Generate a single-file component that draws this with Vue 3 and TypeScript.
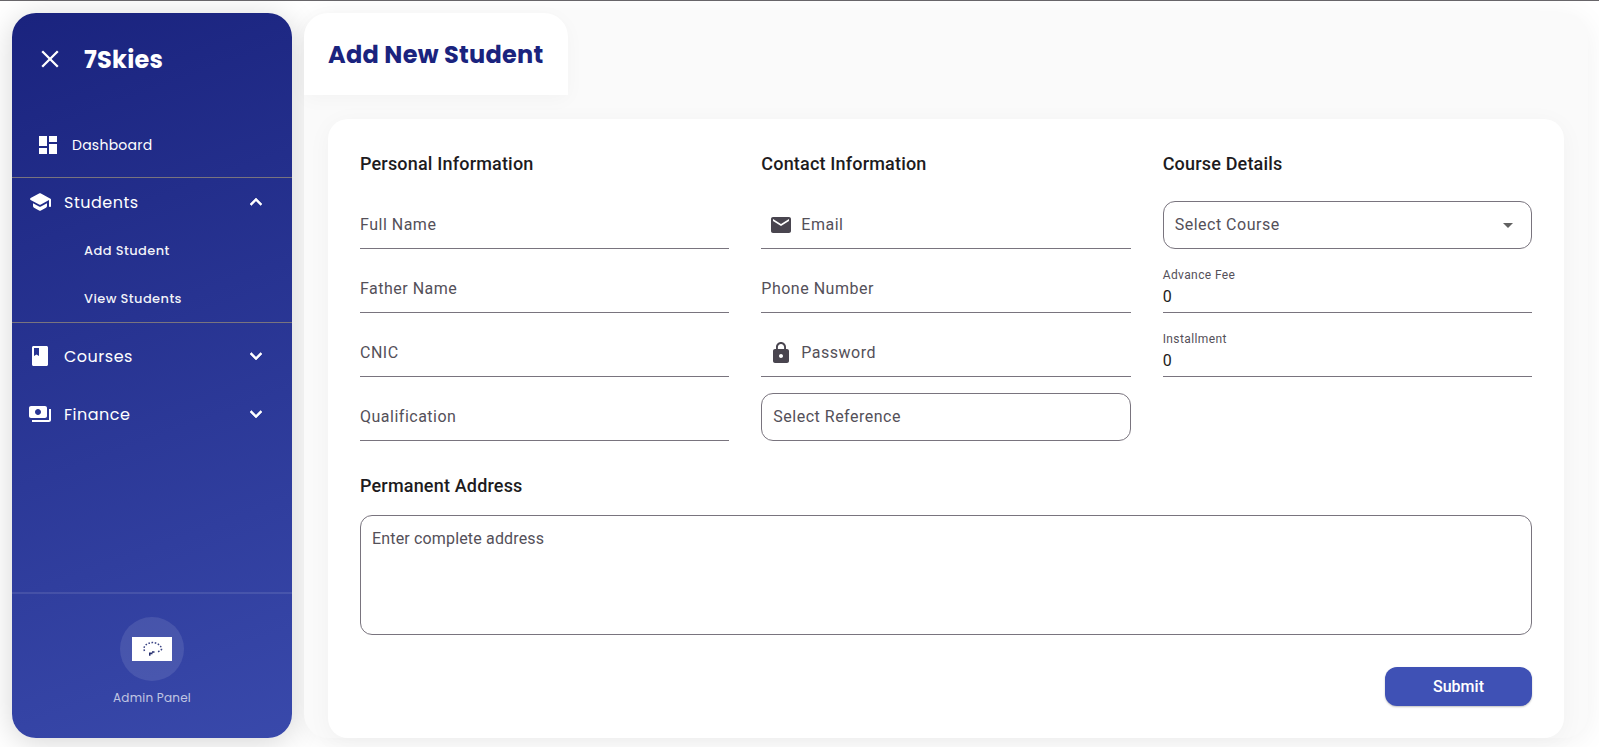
<script setup lang="ts">
interface NavGroup {
  label: string
  icon: string
  open: boolean
  children: string[]
}

interface Field {
  label: string
  value?: string
  icon?: string
  kind?: 'outline' | 'select'
}

interface Section {
  title: string
  fields: Field[]
}

const icons = {
  dashboard: 'M3 13h8V3H3v10zm0 8h8v-6H3v6zm10 0h8V11h-8v10zm0-18v6h8V3h-8z',
  school:
    'M5 13.18v2.81c0 .73.4 1.41 1.04 1.76l5 2.73c.6.33 1.32.33 1.92 0l5-2.73c.64-.35 1.04-1.03 1.04-1.76v-2.81l-6.04 3.3c-.6.33-1.32.33-1.92 0L5 13.18zm6.04-9.66l-8.43 4.6c-.69.38-.69 1.38 0 1.76l8.43 4.6c.6.33 1.32.33 1.92 0L21 10.09V16c0 .55.45 1 1 1s1-.45 1-1V9.59c0-.37-.2-.7-.52-.88l-9.52-5.19c-.6-.32-1.32-.32-1.92 0z',
  book: 'M18.500 2H5.500C4.700 2 4 2.700 4 3.500v17c0 .8.7 1.500 1.500 1.500h13c.8 0 1.500-.7 1.500-1.500v-17c0-.8-.7-1.500-1.500-1.500zM6 4h5v8l-2.500-1.500L6 12V4z',
  payments:
    'M19 14V6c0-1.100-.9-2-2-2H3c-1.100 0-2 .9-2 2v8c0 1.100.9 2 2 2h14c1.100 0 2-.9 2-2zm-9-1c-1.660 0-3-1.340-3-3s1.340-3 3-3 3 1.340 3 3-1.340 3-3 3zm13-6v11c0 1.100-.9 2-2 2H4v-2h17V7h2z',
  less: 'M12 8l-6 6 1.41 1.41L12 10.83l4.59 4.58L18 14z',
  more: 'M16.59 8.59L12 13.17 7.41 8.59 6 10l6 6 6-6z',
  email:
    'M20 4H4c-1.1 0-1.99.9-1.99 2L2 18c0 1.1.9 2 2 2h16c1.1 0 2-.9 2-2V6c0-1.1-.9-2-2-2zm0 4l-8 5-8-5V6l8 5 8-5v2z',
  lock:
    'M18 8h-1V6c0-2.76-2.24-5-5-5S7 3.24 7 6v2H6c-1.1 0-2 .9-2 2v10c0 1.1.9 2 2 2h12c1.1 0 2-.9 2-2V10c0-1.1-.9-2-2-2zm-6 9c-1.1 0-2-.9-2-2s.9-2 2-2 2 .9 2 2-.9 2-2 2zm3.1-9H8.9V6c0-1.71 1.39-3.1 3.1-3.1 1.71 0 3.1 1.39 3.1 3.1v2z',
}

const groups: NavGroup[] = [
  { label: 'Students', icon: icons.school, open: true, children: ['Add Student', 'View Students'] },
  { label: 'Courses', icon: icons.book, open: false, children: [] },
  { label: 'Finance', icon: icons.payments, open: false, children: [] },
]

const sections: Section[] = [
  {
    title: 'Personal Information',
    fields: [{ label: 'Full Name' }, { label: 'Father Name' }, { label: 'CNIC' }, { label: 'Qualification' }],
  },
  {
    title: 'Contact Information',
    fields: [
      { label: 'Email', icon: icons.email },
      { label: 'Phone Number' },
      { label: 'Password', icon: icons.lock },
      { label: 'Select Reference', kind: 'outline' },
    ],
  },
  {
    title: 'Course Details',
    fields: [
      { label: 'Select Course', kind: 'select' },
      { label: 'Advance Fee', value: '0' },
      { label: 'Installment', value: '0' },
    ],
  },
]
</script>

<template>
  <div class="page">
    <aside class="sidebar">
      <div class="panel">
        <div class="brand">
          <svg class="close" viewBox="0 0 18 18"><path d="M1.200 1.200l15.600 15.600M16.800 1.200L1.200 16.800" /></svg>
          <span class="brand-name">7Skies</span>
        </div>
        <a class="dashboard">
          <svg class="icon" viewBox="0 0 24 24"><path :d="icons.dashboard" /></svg>
          <span class="dashboard-label">Dashboard</span>
        </a>
        <nav>
          <div v-for="g in groups" :key="g.label" class="group" :class="{ open: g.open }">
            <div class="group-head">
              <svg class="icon" viewBox="0 0 24 24"><path :d="g.icon" /></svg>
              <span class="group-label">{{ g.label }}</span>
              <svg class="icon chevron" viewBox="0 0 24 24"><path :d="g.open ? icons.less : icons.more" /></svg>
            </div>
            <a v-for="c in g.children" :key="c" class="child"><span class="child-label">{{ c }}</span></a>
          </div>
        </nav>
        <footer class="profile">
          <div class="avatar">
            <svg class="logo" viewBox="0 0 40 24">
              <rect width="40" height="24" fill="#fff" />
              <path class="arc" d="M12.500 14C10.500 9 15 6 20 5.600S30 9 29.500 12.500L26 15" />
              <path class="mark" d="M17 15.500h3v-1.300h2.500v1.600h-2v1.500h-2v1.500h-1.500z" />
            </svg>
          </div>
          <span class="profile-label">Admin Panel</span>
        </footer>
      </div>
    </aside>

    <main class="main">
      <header class="tab"><h1>Add New Student</h1></header>
      <form class="card">
        <div class="columns">
          <section v-for="s in sections" :key="s.title">
            <h2>{{ s.title }}</h2>
            <div class="fields">
              <div
                v-for="f in s.fields"
                :key="f.label"
                class="field"
                :class="[f.kind ? 'boxed' : 'underlined', { filled: f.value }]"
              >
                <svg v-if="f.icon" class="icon prefix" viewBox="0 0 24 24"><path :d="f.icon" /></svg>
                <span class="label">{{ f.label }}</span>
                <span v-if="f.value" class="value">{{ f.value }}</span>
                <svg v-if="f.kind === 'select'" class="caret" viewBox="0 0 10 5"><path d="M0 0h10L5 5z" /></svg>
              </div>
            </div>
          </section>
        </div>
        <h2 class="address-title">Permanent Address</h2>
        <div class="address">Enter complete address</div>
        <button type="button" class="submit">Submit</button>
      </form>
    </main>
  </div>
</template>

<style>
body {
  margin: 0;
  background: #fff;
}
</style>

<style scoped>
* {
  box-sizing: border-box;
}
.page {
  display: flex;
  gap: 12px;
  height: 747px;
  padding: 12px 11px 9px 12px;
  border-top: 1px solid #68666a;
  overflow: hidden;
  font-family: Roboto, sans-serif;
  color: #1d1b20;
}
.icon {
  width: 24px;
  height: 24px;
  fill: currentColor;
  flex: none;
}
.sidebar {
  display: flex;
  flex: none;
  width: 280px;
  border-radius: 24px;
  box-shadow: 0 4px 30px rgba(0, 0, 0, 0.17);
}
.panel {
  position: relative;
  z-index: 2;
  display: flex;
  flex-direction: column;
  width: 280px;
  border-radius: 24px;
  background: linear-gradient(160deg, #1a237e, #3949ab);
  color: #fff;
  font-family: Poppins, Inter, sans-serif;
  overflow: hidden;
}
.brand {
  display: flex;
  align-items: center;
  gap: 25px;
  height: 92px;
  padding-left: 29px;
}
.close {
  width: 18px;
  height: 18px;
  fill: none;
  stroke: #fff;
  stroke-width: 2.3;
}
.brand-name {
  font-size: 24px;
  font-weight: 700;
  letter-spacing: 0.25px;
}
.dashboard {
  display: flex;
  align-items: center;
  gap: 12px;
  height: 48px;
  margin: 16px 0 8px;
  padding-left: 24px;
  font-size: 14px;
  letter-spacing: 0.25px;
}
.dashboard-label {
  padding-top: 1px;
}
.group-head {
  display: flex;
  align-items: center;
  gap: 12px;
  height: 58px;
  padding: 0 24px 0 16px;
}
.group-label {
  flex: 1;
  font-size: 16px;
  letter-spacing: 0.5px;
}
.chevron {
  stroke: currentColor;
  stroke-width: 0.6;
}
.group.open {
  height: 146px;
  margin-bottom: 4px;
  border-top: 1px solid #79747e;
  border-bottom: 1px solid #79747e;
}
.open .group-head {
  height: 48px;
}
.child {
  display: flex;
  align-items: center;
  height: 48px;
  padding: 2px 0 0 72px;
  font-size: 13px;
  font-weight: 500;
  letter-spacing: 0.4px;
  color: rgba(255, 255, 255, 0.94);
}
.profile {
  display: flex;
  flex-direction: column;
  align-items: center;
  gap: 7px;
  height: 146px;
  margin-top: auto;
  padding-top: 23px;
  border-top: 2px solid rgba(255, 255, 255, 0.1);
}
.avatar {
  display: flex;
  align-items: center;
  justify-content: center;
  width: 64px;
  height: 64px;
  border-radius: 50%;
  background: rgba(255, 255, 255, 0.1);
}
.logo {
  width: 40px;
  height: 24px;
}
.arc {
  fill: none;
  stroke: #3c4585;
  stroke-width: 1.5;
  stroke-dasharray: 1.6 1.6;
}
.mark {
  fill: #242d6e;
}
.profile-label {
  font-size: 12px;
  line-height: 20px;
  letter-spacing: 0.22px;
  color: rgba(255, 255, 255, 0.7);
}
.main {
  position: relative;
  z-index: 1;
  display: flex;
  flex-direction: column;
  align-items: flex-start;
  width: 1284px;
  flex: none;
  padding-right: 24px;
  border-radius: 24px;
  background: #fafafa;
  box-shadow: 0 4px 30px rgba(0, 0, 0, 0.06);
}
.tab {
  display: flex;
  align-items: center;
  width: 264px;
  height: 82px;
  padding-left: 24px;
  border-radius: 24px 24px 0 0;
  background: #fff;
  box-shadow: 0 4px 20px rgba(0, 0, 0, 0.03);
}
h1 {
  margin: 0;
  font: 700 24px Poppins, Inter, sans-serif;
  letter-spacing: 0.25px;
  color: #1a237e;
  white-space: nowrap;
}
.card {
  display: flex;
  flex-direction: column;
  width: 1236px;
  height: 619px;
  margin: 24px 0 0 24px;
  padding: 32px;
  border-radius: 20px;
  background: #fff;
  box-shadow: 0 4px 24px rgba(0, 0, 0, 0.04);
}
.columns {
  display: grid;
  grid-template-columns: repeat(3, 1fr);
  gap: 32px;
}
h2 {
  margin: 0;
  font-size: 18px;
  font-weight: 500;
  line-height: 26px;
  letter-spacing: 0.18px;
}
.fields {
  display: grid;
  gap: 16px;
  margin-top: 24px;
}
.field {
  display: flex;
  align-items: center;
  height: 48px;
  font-size: 16px;
  letter-spacing: 0.5px;
  color: #545059;
}
.underlined {
  border-bottom: 1px solid #79747e;
}
.boxed {
  padding: 0 18px 0 11px;
  border: 1px solid #79747e;
  border-radius: 12px;
}
.boxed .label {
  padding-bottom: 1px;
}
.prefix {
  margin: 0 8px;
  fill: #49454f;
}
.filled {
  flex-direction: column;
  align-items: flex-start;
}
.filled .label {
  padding-top: 1px;
  font-size: 12px;
  line-height: 18px;
  letter-spacing: 0.4px;
}
.value {
  padding-top: 1px;
  line-height: 24px;
  color: #1d1b20;
}
.caret {
  width: 10px;
  height: 5px;
  margin-left: auto;
  fill: #616161;
}
.address-title {
  margin-top: 32px;
}
.address {
  height: 120px;
  margin-top: 16px;
  padding: 11px;
  border: 1px solid #79747e;
  border-radius: 12px;
  font-size: 16px;
  line-height: 24px;
  letter-spacing: 0.16px;
  color: #545059;
}
.submit {
  width: 147px;
  height: 39px;
  margin: 32px 0 0 auto;
  padding: 0;
  border: 0;
  border-radius: 12px;
  background: #3f51b5;
  box-shadow: 0 1px 2px rgba(0, 0, 0, 0.25);
  color: #fff;
  font: 500 16px Roboto, sans-serif;
}
</style>
